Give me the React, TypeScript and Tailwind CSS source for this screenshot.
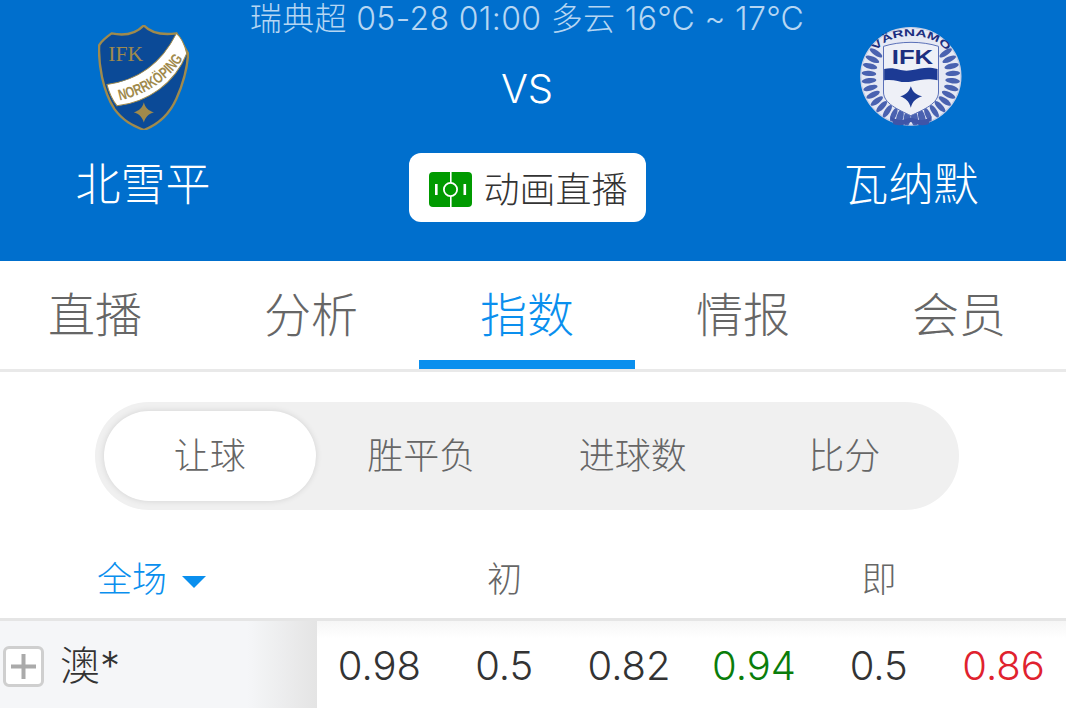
import React from 'react'

function NorrkopingLogo() {
  return (
    <svg width="91" height="105" viewBox="112 75 270 313">
      <path d="M248 76C225 100 190 108 152 100C135 112 122 122 115 135C112 190 125 270 160 325C185 360 215 375 248 388C290 372 325 340 345 295C365 250 378 200 380 160L345 100C300 106 270 100 248 76Z" fill="#0b4a97" stroke="#a08a4c" strokeWidth="7" />
      <path d="M138 252C230 240 300 190 345 100C360 112 370 135 376 160C340 250 260 305 168 316C152 296 144 275 138 252Z" fill="#fff" stroke="#a08a4c" strokeWidth="3" />
      <path id="nk" d="M176 300C250 284 325 240 366 172" fill="none" />
      <text fontFamily="Liberation Sans, sans-serif" fontSize="46" fontWeight="700" fill="#a08a4c">
        <textPath href="#nk" textLength="232" lengthAdjust="spacingAndGlyphs">NORRKÖPING</textPath>
      </text>
      <text x="142" y="182" fontFamily="Liberation Serif, serif" fontSize="62" fill="#a08a4c" textLength="104" lengthAdjust="spacingAndGlyphs">IFK</text>
      <path d="M248 305C252 322 262 330 278 335C262 340 252 350 248 366C244 350 234 340 218 335C234 330 244 322 248 305Z" fill="#a08a4c" />
    </svg>
  )
}

const leaves = Array.from({ length: 15 }, (_, i) => 18 + i * 10)

function VarnamoLogo() {
  return (
    <svg width="102" height="100" viewBox="60 50 305 300">
      <ellipse cx="212" cy="198" rx="150" ry="146" fill="#e6e9f4" stroke="#c9d0e6" strokeWidth="4" />
      {leaves.map((a) => (
        <g key={a}>
          <ellipse cx="212" cy="72" rx="8" ry="22" fill="#4a62b0" transform={`rotate(${a + 38} 212 198)`} />
          <ellipse cx="212" cy="72" rx="8" ry="22" fill="#4a62b0" transform={`rotate(${-a - 38} 212 198)`} />
        </g>
      ))}
      <path id="vn" d="M108 122C150 62 275 62 319 122" fill="none" />
      <text fontFamily="Liberation Sans, sans-serif" fontSize="30" fontWeight="700" fill="#1c2f80">
        <textPath href="#vn" textLength="238" lengthAdjust="spacingAndGlyphs">VÄRNAMO</textPath>
      </text>
      <path d="M130 108C180 92 245 92 295 108V245C295 280 250 298 212 316C175 298 130 280 130 245Z" fill="#eef0f7" stroke="#5a70b8" strokeWidth="3" />
      <text x="155" y="160" fontFamily="Liberation Sans, sans-serif" fontSize="58" fontWeight="700" fill="#1c2f80" textLength="124" lengthAdjust="spacingAndGlyphs">IFK</text>
      <path d="M132 176C170 168 180 186 212 180C245 174 262 168 292 176V210C262 204 245 208 212 214C180 220 165 204 132 210Z" fill="#1c3a94" />
      <path d="M212 228C218 246 228 254 246 258C228 264 218 272 212 292C206 272 196 264 180 258C196 254 206 246 212 228Z" fill="#1c3a94" />
      <path d="M150 318C180 338 195 325 212 322C230 325 245 338 275 318L265 342C240 350 225 340 212 335C200 340 185 350 160 342Z" fill="#3f55a8" />
    </svg>
  )
}

function PitchIcon() {
  return (
    <svg width="43" height="35" viewBox="0 0 43 35">
      <rect width="43" height="35" rx="4" fill="#009a00" />
      <rect x="21" width="1.6" height="11" fill="#fff" />
      <rect x="21" y="24" width="1.6" height="11" fill="#fff" />
      <circle cx="21.5" cy="17.5" r="6.6" fill="none" stroke="#fff" strokeWidth="1.8" />
      <rect x="6" y="12" width="2.6" height="11" fill="#fff" />
      <rect x="34.5" y="12" width="2.6" height="11" fill="#fff" />
    </svg>
  )
}

const tabs = ['直播', '分析', '指数', '情报', '会员']
const subTabs = ['胜平负', '进球数', '比分']
const odds = [
  { v: '0.98', c: 'text-[#333]' },
  { v: '0.5', c: 'text-[#333]' },
  { v: '0.82', c: 'text-[#333]' },
  { v: '0.94', c: 'text-[#0a7d0a]' },
  { v: '0.5', c: 'text-[#333]' },
  { v: '0.86', c: 'text-[#e0222e]' },
]

export default function App() {
  return (
    <div className="w-[1066px] h-[708px] overflow-hidden bg-white font-['Inter','Noto_Sans_CJK_SC',sans-serif] font-light">
      <div className="flex h-[261px] bg-[#006fcd] text-white">
        <div className="w-[286px] flex flex-col items-center pt-[25px]">
          <NorrkopingLogo />
          <div className="mt-[24px] text-[45px] leading-[62px]">北雪平</div>
        </div>
        <div className="w-[482px] flex flex-col items-center">
          <div className="whitespace-nowrap text-[32px] leading-[34px] tracking-[0.35px] text-[#b5d6f3] pt-[2px] h-[34px]">瑞典超 05-28 01:00 多云 16℃ ~ 17℃</div>
          <div className="mt-[30px] text-[40px] leading-[50px]">VS</div>
          <div className="mt-[39px] w-[237px] h-[69px] rounded-[12px] bg-white flex items-center pl-[20px] pt-[4px] gap-[12px]">
            <PitchIcon />
            <span className="text-[36px] leading-[44px] text-[#333]">动画直播</span>
          </div>
        </div>
        <div className="w-[286px] flex flex-col items-center pt-[27px]">
          <VarnamoLogo />
          <div className="mt-[27px] text-[45px] leading-[62px]">瓦纳默</div>
        </div>
      </div>

      <div className="h-[111px] border-b-[3px] border-[#e9e9e9]">
        <div className="flex w-[1080px] -ml-[13px]">
          {tabs.map((t, i) => (
            <div key={t} className={i === 2
              ? 'flex-1 h-[108px] flex items-center justify-center text-[47px] text-[#0a8fee] border-b-[9px] border-[#0a8fee] pt-[9px]'
              : 'flex-1 h-[108px] flex items-center justify-center text-[47px] text-[#666]'}>
              {t}
            </div>
          ))}
        </div>
      </div>

      <div className="px-[95px] pt-[30px]">
        <div className="h-[108px] w-[864px] rounded-full bg-[#f0f0f0] p-[9px] flex">
          <div className="w-[212px] h-[90px] rounded-full bg-white shadow-[0_0_6px_rgba(0,0,0,0.12)] flex items-center justify-center text-[36px] text-[#666]">让球</div>
          {subTabs.map((t) => (
            <div key={t} className="w-[212px] flex items-center justify-center text-[36px] text-[#666]">{t}</div>
          ))}
        </div>
      </div>

      <div className="flex h-[111px] border-b-[3px] border-[#e5e5e5] pt-[30px]">
        <div className="w-[317px] flex items-center pl-[97px] text-[35px] text-[#0a8fee] gap-[15px]">
          全场
          <span className="w-0 h-0 border-x-[12px] border-x-transparent border-t-[12px] border-t-[#0a8fee] mt-[6px]" />
        </div>
        <div className="w-[375px] flex items-center justify-center text-[35px] text-[#666]">初</div>
        <div className="w-[374px] flex items-center justify-center text-[35px] text-[#666]">即</div>
      </div>

      <div className="flex h-[87px] bg-[linear-gradient(180deg,#f6f6f6_0%,#ffffff_20%)]">
        <div className="w-[317px] flex items-center pl-[3px] pt-[3px] gap-[16px] bg-[linear-gradient(90deg,#f5f6f8_78%,#e4e4e4_100%)]">
          <div className="w-[41px] h-[41px] rounded-[6px] border-[3px] border-[#cfcfcf] bg-white flex items-center justify-center">
            <svg width="25" height="25" viewBox="0 0 25 25">
              <rect y="10.5" width="25" height="4" fill="#aaa" />
              <rect x="10.5" width="4" height="25" fill="#aaa" />
            </svg>
          </div>
          <span className="text-[40px] leading-[50px] text-[#333]">澳*</span>
        </div>
        <div className="flex-1 grid grid-cols-6 pt-[3px]">
          {odds.map((o, i) => (
            <div key={i} className={`flex items-center justify-center text-[40px] ${o.c}`}>{o.v}</div>
          ))}
        </div>
      </div>
    </div>
  )
}
